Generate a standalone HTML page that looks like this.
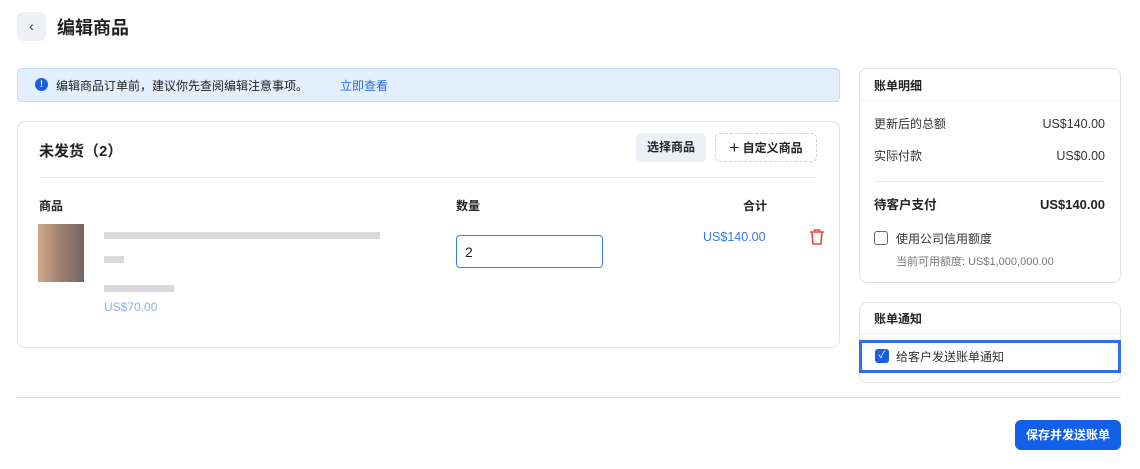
<!DOCTYPE html><html><head><meta charset="utf-8"><style>
*{box-sizing:border-box;margin:0;padding:0}
body{width:1140px;height:469px;background:#fff;font-family:"Liberation Sans","Noto Sans CJK SC",sans-serif;color:#222;position:relative;overflow:hidden;font-size:13px}
.a{position:absolute}
.t{line-height:16px;height:16px}
.card{position:absolute;border:1px solid #dfe2e8;border-radius:8px;background:#fff}
.bar{position:absolute;background:#d9d9dc;height:7px}
</style></head><body>
<div class="a" style="left:17px;top:12px;width:29px;height:29px;background:#eef0f4;border-radius:6px;text-align:center;line-height:28px;font-size:14px;color:#333">‹</div>
<div class="a" style="left:57px;top:14px;font-size:18px;font-weight:bold">编辑商品</div>

<div class="a" style="left:17px;top:68px;width:823px;height:34px;background:#e3effd;border:1px solid #c4dcf8;border-radius:4px"></div>
<div class="a" style="left:35px;top:78px;width:13px;height:13px;border-radius:50%;background:#1a5fe0;color:#fff;font-size:9px;font-weight:bold;text-align:center;line-height:13px">!</div>
<div class="a" style="left:56px;top:77px;font-size:12px;color:#222">编辑商品订单前，建议你先查阅编辑注意事项。</div>
<div class="a" style="left:340px;top:77px;font-size:12px;color:#2a6be0">立即查看</div>

<div class="card" style="left:17px;top:121px;width:823px;height:227px"></div>
<div class="a" style="left:39px;top:140px;font-size:15px;font-weight:bold">未发货（2）</div>
<div class="a" style="left:636px;top:133px;width:70px;height:29px;background:#eceff4;border-radius:5px;font-size:12px;font-weight:bold;text-align:center;line-height:29px">选择商品</div>
<div class="a" style="left:715px;top:133px;width:102px;height:29px;border:1px dashed #ccd0d8;border-radius:5px;font-size:12px;font-weight:bold;text-align:center;line-height:27px"><span style="font-size:17px;font-weight:normal;vertical-align:-1px">+</span> 自定义商品</div>
<div class="a" style="left:39px;top:177px;width:778px;height:1px;background:#eceef2"></div>
<div class="a" style="left:39px;top:197px;font-size:12px;font-weight:bold">商品</div>
<div class="a" style="left:456px;top:197px;font-size:12px;font-weight:bold">数量</div>
<div class="a" style="left:743px;top:197px;font-size:12px;font-weight:bold">合计</div>
<div class="a" style="left:38px;top:224px;width:46px;height:58px;background:linear-gradient(90deg,#c99a78,#8a6a55 50%,#5a4a45);opacity:.85"></div>
<div class="bar" style="left:104px;top:232px;width:276px"></div>
<div class="bar" style="left:104px;top:256px;width:20px"></div>
<div class="bar" style="left:104px;top:285px;width:70px"></div>
<div class="a" style="left:104px;top:300px;font-size:12px;color:#5a8ef0;opacity:.7">US$70.00</div>
<div class="a" style="left:456px;top:235px;width:147px;height:33px;border:1.5px solid #3b7be8;border-radius:4px;padding:8px 0 0 8px;font-size:14px">2</div>
<div class="a" style="left:703px;top:230px;font-size:12.5px;color:#3a78e8">US$140.00</div>
<svg class="a" style="left:808px;top:228px" width="18" height="18" viewBox="0 0 18 18" fill="none" stroke="#e8483a" stroke-width="1.6"><path d="M2 4h14M6.5 4V2h5v2M4 4l1 12h8l1-12"/></svg>

<div class="card" style="left:859px;top:68px;width:262px;height:215px"></div>
<div class="a" style="left:874px;top:77px;font-size:12px;font-weight:bold">账单明细</div>
<div class="a" style="left:860px;top:100px;width:260px;height:1px;background:#eceef2"></div>
<div class="a t" style="left:874px;top:116px;font-size:12px;color:#333">更新后的总额</div>
<div class="a t" style="left:1000px;top:116px;width:105px;text-align:right;font-size:12.5px;color:#333">US$140.00</div>
<div class="a t" style="left:874px;top:148px;font-size:12px;color:#333">实际付款</div>
<div class="a t" style="left:1000px;top:148px;width:105px;text-align:right;font-size:12.5px;color:#333">US$0.00</div>
<div class="a" style="left:874px;top:181px;width:231px;height:1px;background:#e6e8ec"></div>
<div class="a t" style="left:874px;top:197px;font-size:12.5px;font-weight:bold">待客户支付</div>
<div class="a t" style="left:1000px;top:197px;width:105px;text-align:right;font-size:13px;font-weight:bold">US$140.00</div>
<div class="a" style="left:874px;top:231px;width:14px;height:14px;border:1.5px solid #666;border-radius:3px"></div>
<div class="a" style="left:896px;top:230px;font-size:12px;color:#333">使用公司信用额度</div>
<div class="a" style="left:896px;top:253px;font-size:11px;color:#777">当前可用额度: US$1,000,000.00</div>

<div class="card" style="left:859px;top:302px;width:262px;height:81px"></div>
<div class="a" style="left:874px;top:310px;font-size:12px;font-weight:bold">账单通知</div>
<div class="a" style="left:860px;top:333px;width:260px;height:1px;background:#eceef2"></div>
<div class="a" style="left:859px;top:340px;width:262px;height:33px;border:3px solid #2f6ef0"></div>
<div class="a" style="left:875px;top:349px;width:14px;height:14px;background:#1a5fe0;border-radius:3px;color:#fff;font-size:10px;text-align:center;line-height:14px">✓</div>
<div class="a" style="left:896px;top:348px;font-size:12px;color:#333">给客户发送账单通知</div>

<div class="a" style="left:17px;top:397px;width:1104px;height:1px;background:#dfe2e8"></div>
<div class="a" style="left:1015px;top:420px;width:106px;height:30px;background:#1260e8;border-radius:6px;color:#fff;font-size:12px;font-weight:bold;text-align:center;line-height:30px">保存并发送账单</div>
</body></html>
